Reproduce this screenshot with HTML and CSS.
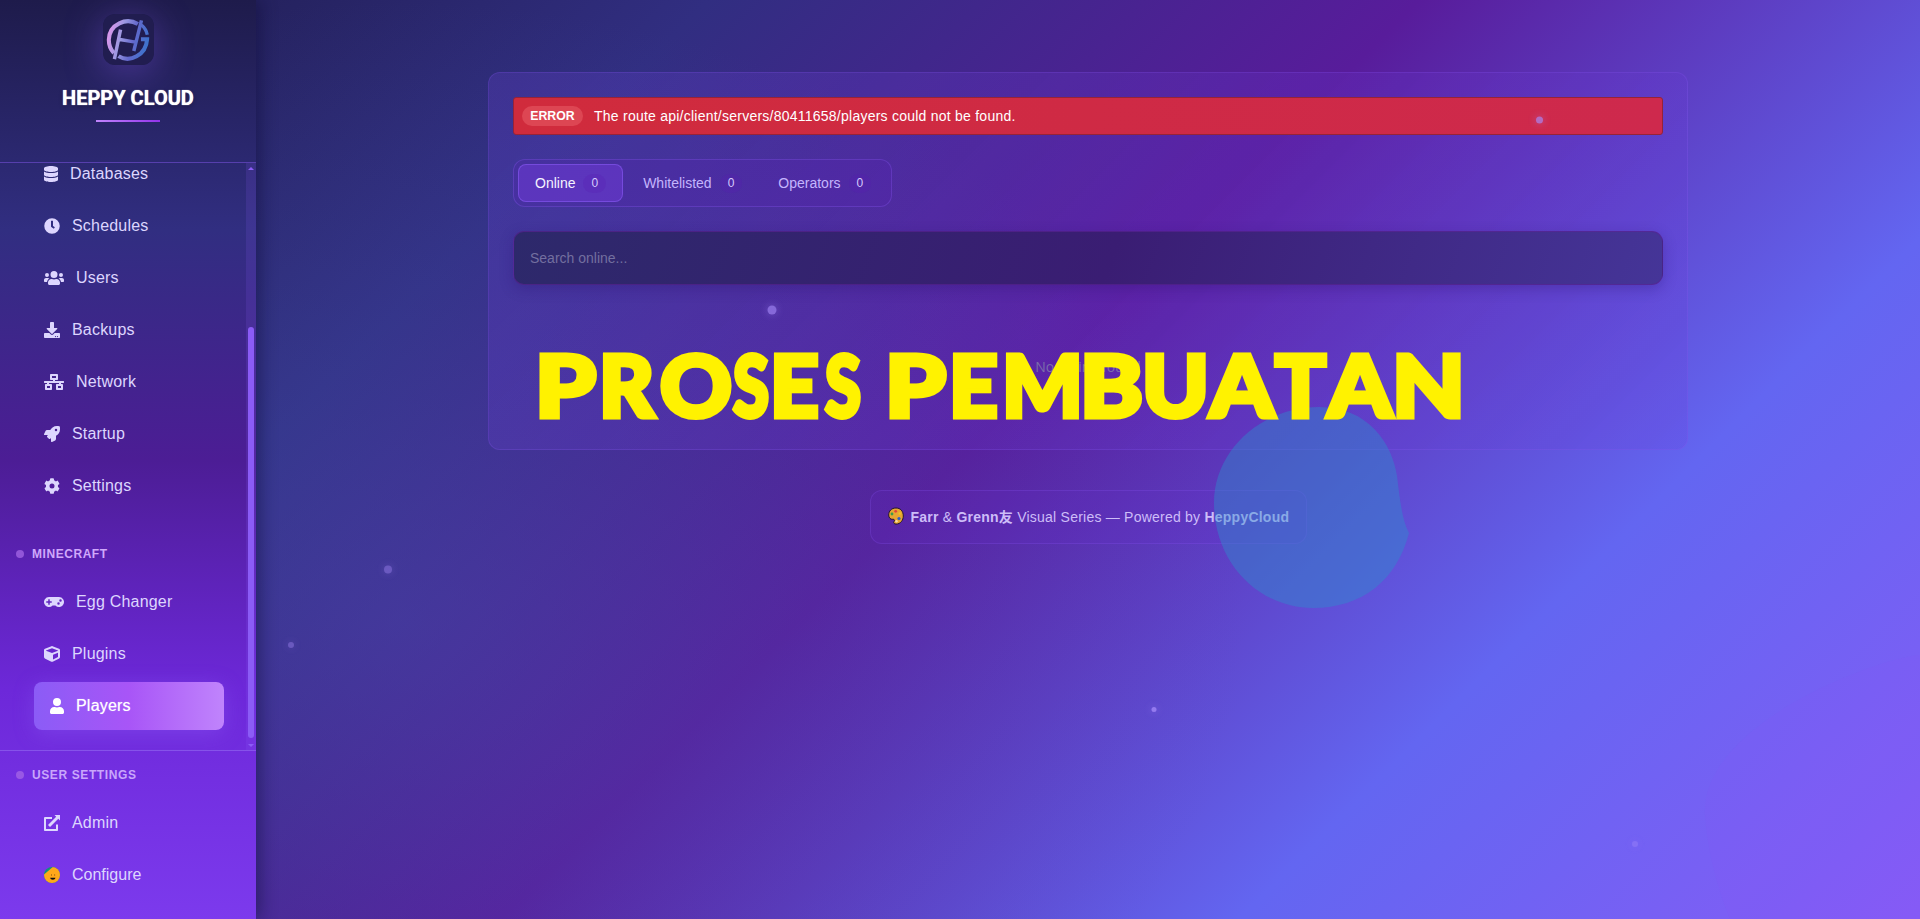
FILE: index.html
```html
<!DOCTYPE html>
<html lang="en">
<head>
<meta charset="utf-8">
<title>Heppy Cloud</title>
<link rel="stylesheet" href="styles.css">
</head>
<body>
<div class="app">
  <aside class="sidebar">
    <header class="brand">
      <svg class="logo" viewBox="0 0 50 50">
        <defs>
          <linearGradient id="lg" gradientUnits="userSpaceOnUse" x1="5" y1="26" x2="44" y2="36"><stop offset="0" stop-color="#d596ea"/><stop offset=".3" stop-color="#9a98e0"/><stop offset=".6" stop-color="#6468cc"/><stop offset="1" stop-color="#3a74cc"/></linearGradient>
        </defs>
        <rect width="50" height="50" rx="11" fill="#211d50"/>
        <g fill="none" stroke="url(#lg)" transform="translate(-.8 .3)">
          <path d="M35 9.500C24 3 7 9 6.500 25c0 6 2 10 5 13" stroke-width="4"/>
          <path d="M16 41c11 7 27-1 28-16.500h-6" stroke-width="4"/>
          <path d="M38.500 10.500c3 2.500 5 6 5.700 9.500" stroke-width="3.200"/>
          <path d="M18 15 12 44M38.500 6 31 36M16 24.500l18 3" stroke-width="3.400"/>
        </g>
      </svg>
      <div class="title">HEPPY CLOUD</div>
      <div class="rule"></div>
    </header>
    <div class="scroller">
      <nav class="nav">
        <a class="item"><svg class="w14" viewBox="0 0 448 512"><path d="M448 73v46c0 40-100 73-224 73S0 159 0 119V73C0 33 100 0 224 0s224 33 224 73zm0 103v103c0 40-100 73-224 73S0 319 0 279V176c48 33 136 49 224 49s176-16 224-49zm0 160v103c0 40-100 73-224 73S0 479 0 439V336c48 33 136 49 224 49s176-16 224-49z"/></svg>Databases</a>
        <a class="item"><svg class="w16" viewBox="0 0 512 512"><path fill-rule="evenodd" d="M256 8a248 248 0 1 0 0 496 248 248 0 0 0 0-496zm-32 92v168c0 8 3 14 9 19l68 51c6 5 15 4 19-2l20-26c5-6 3-14-3-19l-49-36V100c0-7-5-12-12-12h-40c-7 0-12 5-12 12z"/></svg>Schedules</a>
        <a class="item"><svg class="w20" viewBox="0 0 640 512"><path d="M96 224a64 64 0 1 0 0-128 64 64 0 0 0 0 128zm448 0a64 64 0 1 0 0-128 64 64 0 0 0 0 128zm32 32h-64c-18 0-34 7-45 18 40 22 69 62 75 110h66c18 0 32-14 32-32v-32c0-35-29-64-64-64zm-256 0a112 112 0 1 0 0-224 112 112 0 0 0 0 224zm77 32h-8c-42 20-96 20-138 0h-8c-64 0-115 52-115 115v29c0 27 21 48 48 48h288c27 0 48-21 48-48v-29c0-63-51-115-115-115zm-224-14c-11-11-27-18-45-18H64c-35 0-64 29-64 64v32c0 18 14 32 32 32h66c6-48 35-88 75-110z"/></svg>Users</a>
        <a class="item"><svg class="w16" viewBox="0 0 512 512"><path fill-rule="evenodd" d="M216 0h80c13 0 24 11 24 24v168h88c18 0 27 22 14 34L270 378c-7 8-20 8-28 0L90 226c-12-12-3-34 14-34h88V24c0-13 11-24 24-24zm296 376v112c0 13-11 24-24 24H24c-13 0-24-11-24-24V376c0-13 11-24 24-24h147l49 49c20 20 52 20 72 0l49-49h147c13 0 24 11 24 24zM388 464a20 20 0 1 0-40 0 20 20 0 0 0 40 0zm64 0a20 20 0 1 0-40 0 20 20 0 0 0 40 0z"/></svg>Backups</a>
        <a class="item"><svg class="w20" viewBox="0 0 640 512"><path fill-rule="evenodd" d="M224 0h192c18 0 32 14 32 32v128c0 18-14 32-32 32h-64v32h272c9 0 16 7 16 16v32c0 9-7 16-16 16H544v32h32c18 0 32 14 32 32v128c0 18-14 32-32 32H416c-18 0-32-14-32-32V352c0-18 14-32 32-32h64v-32H160v32h64c18 0 32 14 32 32v128c0 18-14 32-32 32H64c-18 0-32-14-32-32V352c0-18 14-32 32-32h32v-32H16c-9 0-16-7-16-16v-32c0-9 7-16 16-16h272v-32h-64c-18 0-32-14-32-32V32c0-18 14-32 32-32zm32 64v64h128V64H256zM96 384v64h96v-64H96zm352 0v64h96v-64h-96z"/></svg>Network</a>
        <a class="item"><svg class="w16" viewBox="0 0 512 512"><path fill-rule="evenodd" d="M505 19c-1-5-7-11-13-12-32-7-57-7-81-7-103 0-165 55-211 128H94c-16 0-35 12-42 26L2 255c-8 16 4 33 22 33h104l-23 23c-12 12-12 32 0 45l51 51c13 13 33 12 45 0l23-23v104c0 18 17 30 33 22l101-50c14-7 26-26 26-42V312c73-46 128-109 128-211 0-25 0-50-7-82zM384 168a40 40 0 1 1 0-80 40 40 0 0 1 0 80z"/></svg>Startup</a>
        <a class="item"><svg class="w16" viewBox="0 0 512 512"><path fill-rule="evenodd" d="m487 316-42-25c4-23 4-47 0-70l42-25c5-3 7-9 6-14-12-36-31-68-55-95-4-4-10-5-15-2l-43 24c-18-15-39-27-61-35V25c0-6-4-11-9-12-36-8-74-8-110 0-5 1-9 6-9 12v49c-22 8-43 20-61 35L87 85c-5-3-11-2-15 2-25 27-44 59-55 95-2 5 1 11 5 14l43 25c-4 23-4 47 0 70l-43 25c-4 3-7 9-5 14 11 36 30 68 55 95 4 4 10 5 15 2l43-24c18 15 39 27 61 35v49c0 6 4 11 9 12 36 8 74 8 110 0 5-1 9-6 9-12v-49c22-8 43-20 61-35l43 24c5 3 11 2 15-2 25-27 44-59 55-95 1-5-1-11-6-14zm-231 20a80 80 0 1 1 0-160 80 80 0 0 1 0 160z"/></svg>Settings</a>
        <div class="section">MINECRAFT</div>
        <a class="item"><svg class="w20" viewBox="0 0 640 512"><path fill-rule="evenodd" d="M480 96H160a160 160 0 1 0 115 272h90A160 160 0 1 0 480 96zM248 268c0 7-5 12-12 12h-52v52c0 7-5 12-12 12h-24c-7 0-12-5-12-12v-52H84c-7 0-12-5-12-12v-24c0-7 5-12 12-12h52v-52c0-7 5-12 12-12h24c7 0 12 5 12 12v52h52c7 0 12 5 12 12v24zm216 76a40 40 0 1 1 0-80 40 40 0 0 1 0 80zm64-96a40 40 0 1 1 0-80 40 40 0 0 1 0 80z"/></svg>Egg Changer</a>
        <a class="item"><svg class="w16" viewBox="0 0 512 512"><path fill-rule="evenodd" d="m239 6-208 78C12 91 0 109 0 129v225c0 18 10 35 27 43l208 104c13 7 29 7 42 0l208-104c17-8 27-25 27-43V129c0-20-12-38-31-45L273 6c-11-4-23-4-34 0zm17 69 192 72v1l-192 78-192-78v-1l192-72zm32 356V282l160-65v134l-160 80z"/></svg>Plugins</a>
        <a class="item active"><svg class="w14" viewBox="0 0 448 512"><path d="M224 256a128 128 0 1 0 0-256 128 128 0 0 0 0 256zm90 32h-17c-46 21-100 21-146 0h-17C60 288 0 348 0 422v42c0 27 22 48 48 48h352c27 0 48-21 48-48v-42c0-74-60-134-134-134z"/></svg>Players</a>
      </nav>
      <div class="track"><i class="up"></i><div class="thumb"></div><i class="down"></i></div>
    </div>
    <footer class="user">
      <div class="section">USER SETTINGS</div>
      <a class="item"><svg class="w16" viewBox="0 0 16 16"><path d="M8 2.900H1v12.200h12V9.500" fill="none" stroke="#ddd6fe" stroke-width="2" stroke-linejoin="round"/><path d="M10.500 0H16v5.500l-1.700-1.700L6 12 4 10l8.200-8.300z"/></svg>Admin</a>
      <a class="item"><svg class="w16" viewBox="0 0 16 16"><clipPath id="face"><circle cx="8" cy="8" r="8"/></clipPath><g clip-path="url(#face)"><path fill="#13917b" d="M0 0h16v16H0z"/><path fill="#ffa81a" d="M10-1h8v18H0V7.500z"/></g><path fill="#b57414" d="M7 7h.9v2H7zM10.200 7h.9v2h-.9z"/><path fill="#111" d="M6.200 10.700h5.200c0 2.600-5.200 2.600-5.200 0z"/></svg><span class="tight">Configure</span></a>
    </footer>
  </aside>
  <main class="main">
    <section class="panel">
      <div class="alert"><span class="tag">ERROR</span><span class="message">The route api/client/servers/80411658/players could not be found.</span></div>
      <div class="tabs">
        <div class="tab on">Online<span class="count">0</span></div>
        <div class="tab">Whitelisted<span class="count">0</span></div>
        <div class="tab">Operators<span class="count">0</span></div>
      </div>
      <div class="search">Search online...</div>
      <p class="empty">No online found</p>
    </section>
    <div class="credit">
      <svg viewBox="0 0 16 18"><path fill="#e6a632" stroke="#23152f" d="M8 1C3.500 1 .7 4 .7 8c0 3 1.800 4.500 4 4.300 1.800-.2 2.300 1 1.300 2.200-.9 1.200.2 2.600 2 2.600 4.500 0 7.300-3.800 7.300-8.100C15.300 4 12.300 1 8 1z"/><circle cx="4" cy="7" r="1.400" fill="#3a9d4a"/><circle cx="7.700" cy="4.300" r="1.400" fill="#e0453a"/><circle cx="11.800" cy="6.500" r="1.300" fill="#f0c51c"/><circle cx="11" cy="11.500" r="1.600" fill="#2d5fc4"/><circle cx="8.500" cy="14.300" r="1.200" fill="#f6dfae"/></svg>
      <span><b>Farr</b> &amp; <b>Grenn友</b> Visual Series — Powered by <b>HeppyCloud</b></span>
    </div>
  </main>
</div>
<svg class="overlay" viewBox="0 0 1920 919">
  <path class="blob" d="M1214 503C1214 450 1262 407 1319 407 1368 407 1392 443 1397 476 1400 500 1402 520 1409 533 1397 580 1362 608 1313 608 1258 608 1214 562 1214 503z"/>
  <path class="far" d="M1920 655C1890 655 1700 720 1705 815 1708 860 1722 900 1730 919H1920z"/>
  <g class="dots">
    <circle cx="772" cy="310" r="4.500" opacity=".8"/>
    <circle cx="1539.500" cy="120" r="3.500" opacity=".9"/>
    <circle cx="388" cy="569.500" r="4" opacity=".5"/>
    <circle cx="291" cy="645" r="3" opacity=".5"/>
    <circle cx="1154" cy="709.500" r="2.500"/>
    <circle cx="1635" cy="844" r="3" opacity=".45"/>
  </g>
  <text class="headline" y="416.500"><tspan x="535" textLength="61" lengthAdjust="spacingAndGlyphs">P</tspan><tspan x="599">R</tspan><tspan x="660" textLength="72" lengthAdjust="spacingAndGlyphs">O</tspan><tspan x="733" textLength="36" lengthAdjust="spacingAndGlyphs">S</tspan><tspan x="770">E</tspan><tspan x="825" textLength="36" lengthAdjust="spacingAndGlyphs">S</tspan> <tspan x="885" textLength="61" lengthAdjust="spacingAndGlyphs">P</tspan><tspan x="949">E</tspan><tspan x="1002">M</tspan><tspan x="1080" textLength="63" lengthAdjust="spacingAndGlyphs">B</tspan><tspan x="1142" textLength="67" lengthAdjust="spacingAndGlyphs">U</tspan><tspan x="1210" textLength="64" lengthAdjust="spacingAndGlyphs">A</tspan><tspan x="1275" textLength="51" lengthAdjust="spacingAndGlyphs">T</tspan><tspan x="1328" textLength="64" lengthAdjust="spacingAndGlyphs">A</tspan><tspan x="1392" textLength="73" lengthAdjust="spacingAndGlyphs">N</tspan></text>
</svg>
</body>
</html>
```
FILE: styles.css
```css
* { box-sizing: border-box; }
body {
  margin: 0;
  height: 919px;
  overflow: hidden;
  font-family: "Liberation Sans", "Noto Sans CJK JP", sans-serif;
  background:
    radial-gradient(ellipse 850px 620px at 400px 620px, rgba(70, 85, 180, .38), transparent),
    linear-gradient(135deg, #1e1b4b 0%, #312e81 25%, #581c9b 50%, #6366f1 76%, #855cf6 100%);
}
.app { display: flex; height: 919px; }
.sidebar {
  width: 256px;
  display: flex;
  flex-direction: column;
  background: linear-gradient(180deg, #1e1b4b 0%, #312e81 25%, #4c1d95 50%, #6d28d9 75%, #7c3aed 100%);
  box-shadow: 4px 0 16px rgba(10, 8, 50, .45);
}
.brand {
  height: 163px;
  flex: none;
  display: flex;
  flex-direction: column;
  align-items: center;
  padding-top: 14px;
  border-bottom: 1px solid rgba(139, 92, 246, .45);
}
.logo { width: 51px; height: 51px; border-radius: 12px; box-shadow: 0 6px 38px rgba(139, 92, 246, .42); }
.title {
  margin-top: 21px;
  font: 700 20px/24px Roboto, sans-serif;
  color: #fff;
  text-shadow: 0 0 1px #fff, 0 2px 4px rgba(0, 0, 0, .3);
}
.rule { width: 64px; height: 2px; margin-top: 10px; background: linear-gradient(90deg, #c084fc, #9333ea); }
.scroller { height: 588px; flex: none; display: flex; border-bottom: 1px solid rgba(167, 139, 250, .4); }
.nav { flex: 1; height: 587px; overflow: hidden; display: flex; flex-direction: column; justify-content: flex-end; padding: 0 0 20px 28px; }
.item {
  flex: none;
  height: 48px;
  margin-top: 4px;
  padding-left: 16px;
  display: flex;
  align-items: center;
  gap: 12px;
  font-size: 16px;
  letter-spacing: .2px;
  color: #ddd6fe;
}
.tight { letter-spacing: 0; }
.item svg { height: 16px; fill: #ddd6fe; flex: none; }
.w14 { width: 14px; }
.w16 { width: 16px; }
.w20 { width: 20px; }
.active {
  width: 190px;
  margin-left: 6px;
  border-radius: 8px;
  color: #fff;
  background: linear-gradient(90deg, #8b5cf6, #a855f7 50%, #c084fc);
  box-shadow: 0 4px 20px rgba(139, 92, 246, .4);
  text-shadow: 0 0 1px rgba(255, 255, 255, .6);
}
.active svg { fill: #fff; }
.section {
  flex: none;
  margin: 36px 0 12px -12px;
  height: 16px;
  display: flex;
  align-items: center;
  gap: 8px;
  font: 700 12px/16px "Liberation Sans", sans-serif;
  letter-spacing: .55px;
  color: #d0a8fb;
}
.section::before { content: ""; width: 8px; height: 8px; border-radius: 50%; background: #a567e6; opacity: .75; }
.track { width: 10px; display: flex; flex-direction: column; align-items: center; padding: 4px 0 3px; background: rgba(139, 92, 246, .15); }
.track i { width: 0; border: 3px solid transparent; flex: none; }
.up { border-bottom-color: #8b5cf6 !important; border-top: 0 !important; }
.down { border-top-color: #8b5cf6 !important; border-bottom: 0 !important; }
.thumb { width: 6px; height: 411px; margin: auto 0 6px; border-radius: 3px; background: #8b5cf6; }
.user { padding-left: 28px; }
.user .section { margin: 16px 0 16px -12px; letter-spacing: .6px; color: #c9a6fb; }
.main { flex: 1; display: flex; flex-direction: column; align-items: center; padding-top: 72px; }
.panel {
  width: 1200px;
  height: 378px;
  padding: 24px;
  display: flex;
  flex-direction: column;
  gap: 24px;
  border: 1px solid rgba(139, 92, 246, .22);
  border-radius: 12px;
  background: linear-gradient(135deg, rgba(109, 69, 217, .25), rgba(109, 50, 217, .17));
  font-size: 14px;
}
.alert {
  height: 38px;
  display: flex;
  align-items: center;
  gap: 11px;
  padding-left: 8px;
  border: 1px solid #962338;
  border-radius: 3px;
  background: linear-gradient(90deg, #d02b3c, #ce294d);
  color: #fff;
}
.message { letter-spacing: .24px; }
.tag { width: 61px; height: 20px; line-height: 20px; border-radius: 10px; text-align: center; background: #dd4653; font-weight: 700; font-size: 12.3px; }
.tabs {
  align-self: flex-start;
  width: 379px;
  height: 48px;
  display: flex;
  padding: 4px;
  border: 1px solid rgba(139, 92, 246, .3);
  border-radius: 12px;
  background: rgba(91, 33, 182, .22);
}
.tab { height: 38px; padding: 0 15px 0 16px; margin-right: 3px; display: flex; align-items: center; gap: 8px; border: 1px solid transparent; border-radius: 8px; color: #c4b5fd; }
.on { padding-right: 16px; color: #f5f3ff; background: rgba(109, 59, 213, .55); border-color: rgba(139, 92, 246, .55); }
.count { height: 19px; line-height: 19px; padding: 0 8px; border-radius: 10px; font-size: 12px; background: rgba(88, 28, 180, .25); color: #d6cbfd; }
.search {
  height: 54px;
  line-height: 52px;
  padding-left: 16px;
  border: 1px solid rgba(91, 33, 150, .6);
  border-radius: 11px;
  color: #736f9f;
  background: linear-gradient(110deg, #2d296b, #3a1d73 52%, #453598);
  box-shadow: 0 4px 14px rgba(40, 15, 110, .3);
}
.empty { margin: 48px 0 0; text-align: center; font: 14px/20px "Open Sans", sans-serif; color: #7a6cab; }
.credit {
  width: 437px;
  height: 54px;
  margin-top: 40px;
  padding: 0 0 2px 17px;
  display: flex;
  align-items: center;
  gap: 7px;
  font-size: 14px;
  letter-spacing: .23px;
  white-space: nowrap;
  color: #cdbdf8;
  border: 1px solid rgba(139, 92, 246, .22);
  border-radius: 12px;
  background: rgba(109, 40, 217, .15);
}
.credit svg { width: 16px; height: 18px; flex: none; }
.overlay { position: absolute; left: 0; top: 0; width: 1920px; height: 919px; pointer-events: none; }
.blob { fill: rgba(42, 142, 205, .42); }
.far { fill: rgba(139, 80, 246, .12); }
.dots { fill: #a78bfa; filter: drop-shadow(0 0 4px rgba(167, 139, 250, .7)); opacity: .75; }
.headline { font: 900 85px Lato, sans-serif; fill: #fff200; stroke: #fff200; stroke-width: 5px; }
```
